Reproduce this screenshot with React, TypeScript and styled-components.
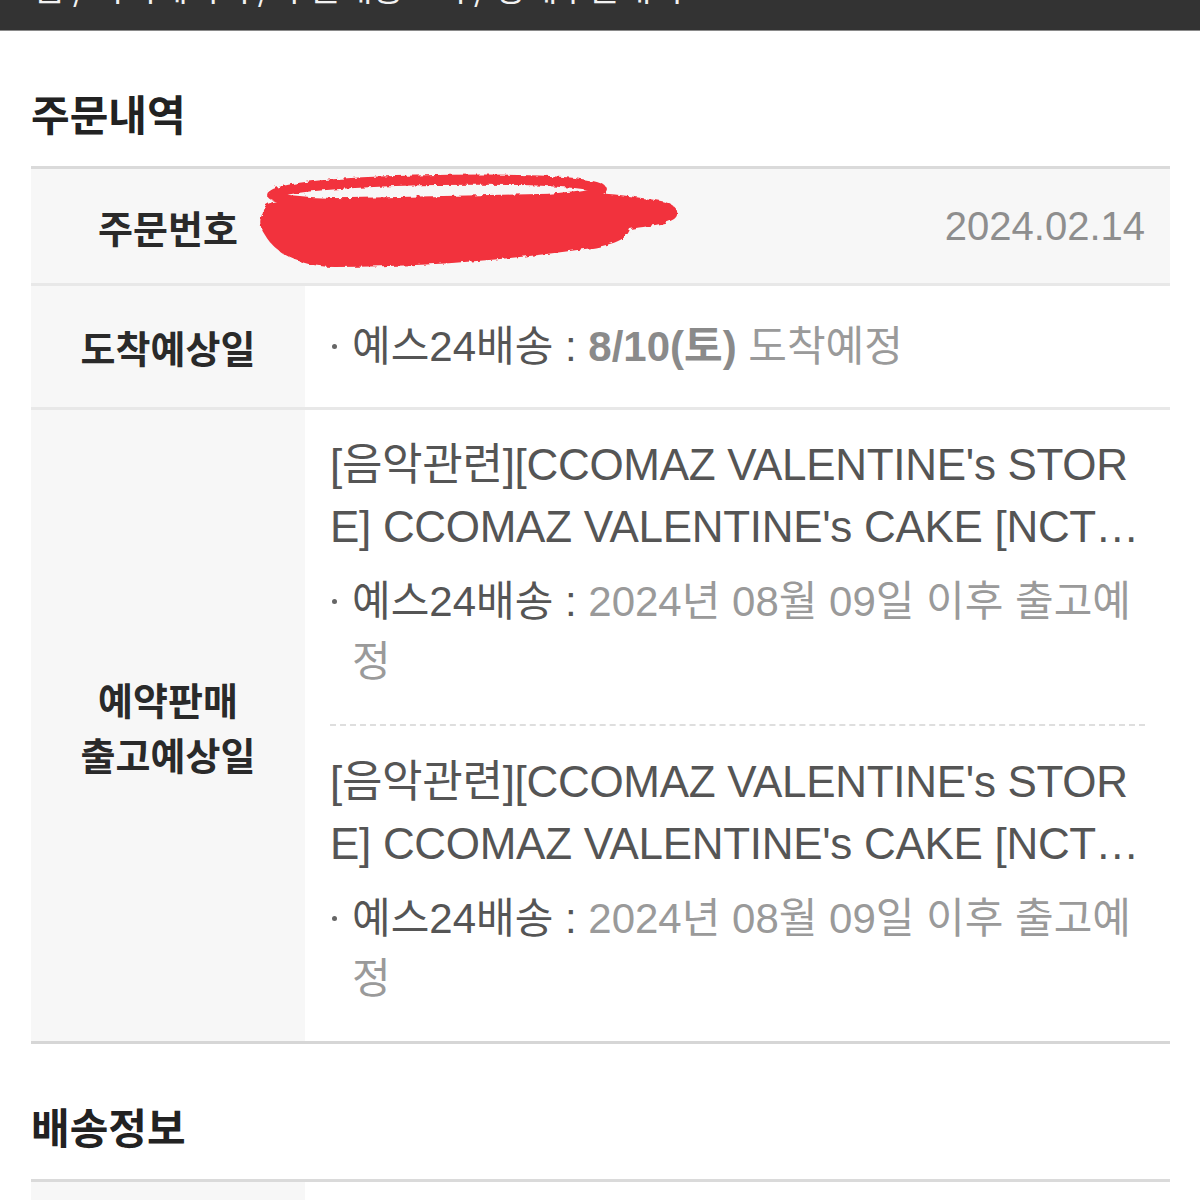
import styled, { createGlobalStyle } from 'styled-components';

const GlobalStyle = createGlobalStyle`
  body {
    margin: 0;
    background: #fff;
    font-family: 'Liberation Sans', 'Noto Sans CJK KR', sans-serif;
  }
`;

type Item = { title: string; date: string };

const items: Item[] = [
  {
    title: "[음악관련][CCOMAZ VALENTINE's STORE] CCOMAZ VALENTINE's CAKE [NCT 127] 케이크 토퍼 세트",
    date: '2024년 08월 09일 이후 출고예정',
  },
  {
    title: "[음악관련][CCOMAZ VALENTINE's STORE] CCOMAZ VALENTINE's CAKE [NCT 127] 케이크 토퍼 세트",
    date: '2024년 08월 09일 이후 출고예정',
  },
];

// 주문번호 가린 빨간 낙서
const Scribble = () => (
  <ScribbleSvg viewBox="0 0 430 100" width="430" height="100">
    <defs>
      <filter id="crayon">
        <feTurbulence type="fractalNoise" baseFrequency="0.18" numOctaves="2" result="noise" />
        <feDisplacementMap in="SourceGraphic" in2="noise" scale="5" />
      </filter>
    </defs>
    <g filter="url(#crayon)">
      <ellipse
        cx="182"
        cy="19"
        rx="165"
        ry="12"
        fill="none"
        stroke="#f2323d"
        strokeWidth="10"
        transform="rotate(-1 182 19)"
      />
      <path
        d="M8 40 C6 30 20 26 50 26 L330 20 C360 20 380 24 400 27 C415 29 424 34 422 42 C420 50 400 52 375 56 C372 66 360 72 330 76 C260 86 170 94 80 94 C45 94 20 80 10 62 C4 54 4 46 8 40 Z"
        fill="#f2323d"
      />
    </g>
  </ScribbleSvg>
);

export default function App() {
  return (
    <>
      <GlobalStyle />
      <TopBar>
        <Crumbs>홈 / 마이페이지 / 주문배송조회 / 상세주문내역</Crumbs>
      </TopBar>
      <Page>
        <SectionTitle>주문내역</SectionTitle>
        <Table>
          <Row $shaded>
            <Label>주문번호</Label>
            <OrderValue>
              <Scribble />
              <OrderDate>2024.02.14</OrderDate>
            </OrderValue>
          </Row>
          <Row>
            <Label>도착예상일</Label>
            <Value>
              <Delivery>
                <Bullet />
                <DeliveryText>
                  예스24배송 : <Strong>8/10(토)</Strong> <Muted>도착예정</Muted>
                </DeliveryText>
              </Delivery>
            </Value>
          </Row>
          <Row>
            <Label>
              예약판매
              <br />
              출고예상일
            </Label>
            <ItemList>
              {items.map((item, i) => (
                <ProductItem key={i}>
                  <Title>{item.title}</Title>
                  <Delivery>
                    <Bullet />
                    <DeliveryText>
                      예스24배송 : <Muted>{item.date}</Muted>
                    </DeliveryText>
                  </Delivery>
                </ProductItem>
              ))}
            </ItemList>
          </Row>
        </Table>
        <SectionTitle>배송정보</SectionTitle>
        <Table>
          <Row>
            <Label />
            <Value />
          </Row>
        </Table>
      </Page>
    </>
  );
}

const TopBar = styled.div`
  height: 30px;
  background: #333333;
  border-bottom: 1px solid #8a8a8a;
  overflow: hidden;
  padding-left: 34px;
`;

const Crumbs = styled.div`
  margin-top: -30px;
  font-family: 'Noto Sans CJK KR', sans-serif;
  font-size: 34px;
  line-height: 34px;
  color: #f2f2f2;
  white-space: nowrap;
`;

const Page = styled.div`
  padding: 0 30px 0 31px;
`;

const SectionTitle = styled.h2`
  margin: 0;
  padding: 60px 0 31px;
  font-family: 'Noto Sans CJK KR', sans-serif;
  font-size: 42px;
  line-height: 44px;
  font-weight: 700;
  color: #222;
`;

const Table = styled.div`
  border-top: 3px solid #dadada;
  border-bottom: 3px solid #d6d6d6;
`;

const Row = styled.div<{ $shaded?: boolean }>`
  display: grid;
  grid-template-columns: 274px 1fr;
  background: ${({ $shaded }) => ($shaded ? '#f7f7f7' : '#fff')};
  & + & {
    border-top: 3px solid #e8e8e8;
  }
  &:first-child {
    min-height: 114px;
  }
  &:nth-child(2) {
    min-height: 121px;
  }
`;

const Label = styled.div`
  display: flex;
  align-items: center;
  justify-content: center;
  text-align: center;
  background: #f7f7f7;
  font-family: 'Noto Sans CJK KR', sans-serif;
  font-size: 38px;
  line-height: 55px;
  font-weight: 700;
  color: #2a2a2a;
  min-height: 114px;
`;

const Value = styled.div`
  display: flex;
  align-items: center;
  padding: 0 25px;
`;

const OrderValue = styled(Value)`
  position: relative;
  justify-content: flex-end;
`;

const ScribbleSvg = styled.svg`
  position: absolute;
  left: -50px;
  top: 4px;
`;

const OrderDate = styled.span`
  font-size: 40px;
  color: #8e8e8e;
`;

const ItemList = styled.div`
  padding: 0 25px;
`;

const ProductItem = styled.div`
  padding: 24px 0 32px;
  & + & {
    border-top: 2px dashed #dedede;
    padding-top: 25px;
  }
`;

const Title = styled.div`
  max-width: 812px;
  font-size: 44px;
  line-height: 62px;
  color: #555;
  word-break: break-all;
  display: -webkit-box;
  -webkit-line-clamp: 2;
  -webkit-box-orient: vertical;
  overflow: hidden;
  letter-spacing: -0.3px;
  margin-bottom: 14px;
`;

const Delivery = styled.div`
  display: flex;
  align-items: flex-start;
  font-size: 42px;
  line-height: 60px;
  color: #555;
`;

const Bullet = styled.span`
  flex: none;
  width: 22px;
  height: 60px;
  position: relative;
  &::before {
    content: '';
    position: absolute;
    left: 2px;
    top: 27px;
    width: 5px;
    height: 5px;
    border-radius: 50%;
    background: #666;
  }
`;

const DeliveryText = styled.div`
  flex: 1;
  word-break: break-all;
`;

const Strong = styled.b`
  color: #8a8a8a;
`;

const Muted = styled.span`
  color: #9a9a9a;
`;
